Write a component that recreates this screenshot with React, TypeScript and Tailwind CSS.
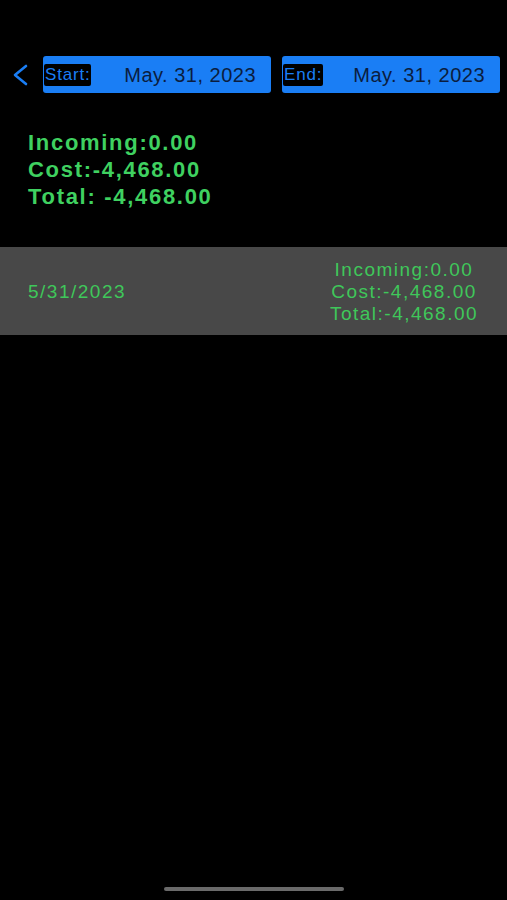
import React from 'react';

const font = { fontFamily: '"Liberation Sans", Arial, sans-serif' };

interface DateButtonProps {
  label: string;
  value: string;
  className: string;
}

const DateButton: React.FC<DateButtonProps> = ({ label, value, className }) => (
  <div className={`h-[37px] bg-[#1a7ef5] rounded-[3px] flex items-center ${className}`}>
    <span className="ml-[1px] bg-black text-[#1a7ef5] text-[17px] leading-[22px] tracking-[0.8px] px-[1px] rounded-[2px]">
      {label}
    </span>
    <span className="flex-1 text-right pr-[15px] text-[20px] text-[#0b1d3f] tracking-[0.5px]">{value}</span>
  </div>
);

export default function App() {
  return (
    <div className="w-[507px] h-[900px] bg-black relative overflow-hidden" style={font}>
      {/* Header */}
      <div className="pt-[56px] flex items-center">
        <svg width="18" height="22" viewBox="0 0 18 22" className="ml-[11px] mr-[14px]">
          <path d="M15 2 L4 11 L15 20" fill="none" stroke="#1a7ef5" strokeWidth="2.6" strokeLinecap="round" strokeLinejoin="round" />
        </svg>
        <DateButton label="Start:" value="May. 31, 2023" className="w-[228px]" />
        <DateButton label="End:" value="May. 31, 2023" className="w-[218px] ml-[11px]" />
      </div>

      {/* Summary */}
      <div className="pl-[28px] pt-[36px] text-[#3fd160] text-[22px] font-bold leading-[27px] tracking-[1.7px]">
        <div>Incoming:0.00</div>
        <div>Cost:-4,468.00</div>
        <div>Total: -4,468.00</div>
      </div>

      {/* Day row */}
      <div className="mt-[37px] h-[88px] pt-[2px] bg-[#484848] flex items-center text-[#3fc75a] text-[19px] tracking-[1.5px]">
        <div className="pl-[28px] flex-1">5/31/2023</div>
        <div className="w-[160px] mr-[23px] text-center leading-[22px]">
          <div>Incoming:0.00</div>
          <div>Cost:-4,468.00</div>
          <div>Total:-4,468.00</div>
        </div>
      </div>

      {/* Home indicator */}
      <div className="absolute left-[164px] bottom-[9px] w-[180px] h-[4px] rounded-full bg-[#6a6a6a]" />
    </div>
  );
}
